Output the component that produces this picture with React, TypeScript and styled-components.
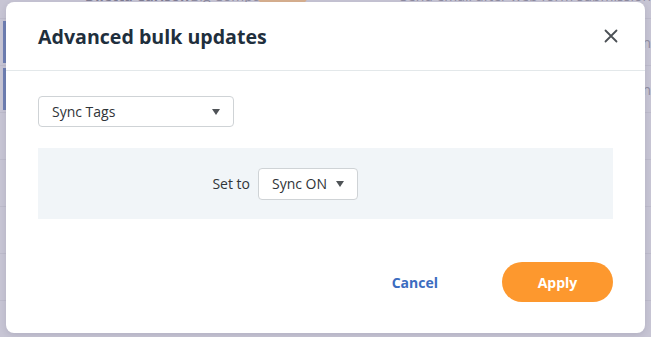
import styled, { createGlobalStyle } from 'styled-components';

const GlobalStyle = createGlobalStyle`
  html, body {
    margin: 0;
    padding: 0;
    width: 651px;
    height: 337px;
    overflow: hidden;
    font-family: "Open Sans", "Liberation Sans", sans-serif;
  }
`;

const Page = styled.div`
  position: relative;
  width: 651px;
  height: 337px;
  background-color: #c7c5d4;
  overflow: hidden;
`;

const BackTable = styled.div`
  display: flex;
  flex-direction: column;
  margin-top: -28px;
`;

const BackRow = styled.div`
  display: flex;
  align-items: center;
  height: 46px;
  border-bottom: 1px solid #bdbbcb;
  color: #8f8ca0;
  font-size: 14px;
  white-space: nowrap;
`;

const RowMarker = styled.div<{ $on?: boolean }>`
  width: 3px;
  height: 42px;
  margin-left: 3px;
  background-color: ${(p) => (p.$on ? '#6f7fb3' : 'transparent')};
`;

const BackName = styled.span`
  margin-left: 79px;
  width: 110px;
  font-weight: 700;
  color: #7f7c92;
`;

const BackCompany = styled.span`
  width: 67px;
`;

const BackPill = styled.span<{ $show?: boolean }>`
  width: 53px;
  height: 20px;
  border-radius: 10px;
  background-color: ${(p) => (p.$show ? '#d8b08f' : 'transparent')};
  margin-right: 92px;
`;

const Overlay = styled.div`
  position: absolute;
  inset: 0;
  display: flex;
  padding: 2px 6px 4px 6px;
`;

const Modal = styled.div`
  flex: 1;
  display: flex;
  flex-direction: column;
  background-color: #ffffff;
  border-radius: 8px;
  box-shadow: 0 2px 6px rgba(40, 40, 70, 0.12);
`;

const Header = styled.div`
  display: flex;
  align-items: center;
  justify-content: space-between;
  height: 68px;
  padding: 0 24px 0 32px;
  border-bottom: 1px solid #e3e8ea;
`;

const Title = styled.h2`
  margin: 0;
  font-size: 19.6px;
  font-weight: 700;
  color: #1f2f3d;
`;

const CloseButton = styled.button`
  display: flex;
  align-items: center;
  justify-content: center;
  width: 20px;
  height: 20px;
  padding: 0;
  border: none;
  background: none;
  cursor: pointer;
`;

const Body = styled.div`
  display: flex;
  flex-direction: column;
  gap: 21px;
  padding: 25px 32px 0 32px;
`;

const Select = styled.div<{ $width: number; $height: number }>`
  display: flex;
  align-items: center;
  justify-content: space-between;
  box-sizing: border-box;
  width: ${(p) => p.$width}px;
  height: ${(p) => p.$height}px;
  padding: 0 13px 0 13px;
  border: 1px solid #cfd3d6;
  border-radius: 4px;
  background-color: #ffffff;
  font-size: 14px;
  color: #2f3438;
  cursor: pointer;
`;

const Caret = styled.span`
  width: 0;
  height: 0;
  border-left: 4.5px solid transparent;
  border-right: 4.5px solid transparent;
  border-top: 6px solid #4f5357;
`;

const Panel = styled.div`
  display: grid;
  grid-template-columns: 212px auto;
  column-gap: 8px;
  align-items: center;
  height: 71px;
  background-color: #f1f5f8;
`;

const FieldLabel = styled.span`
  justify-self: end;
  font-size: 14px;
  color: #2f3438;
`;

const Footer = styled.div`
  display: flex;
  justify-content: flex-end;
  align-items: center;
  gap: 40px;
  margin-top: auto;
  padding: 0 32px 31px 32px;
`;

const LinkButton = styled.button`
  padding: 0 24px 0 0;
  border: none;
  background: none;
  font-family: inherit;
  font-size: 14px;
  font-weight: 700;
  color: #3b6cc0;
  cursor: pointer;
`;

const PrimaryButton = styled.button`
  width: 111px;
  height: 40px;
  border: none;
  border-radius: 20px;
  background-color: #fd982e;
  font-family: inherit;
  font-size: 14px;
  font-weight: 700;
  color: #ffffff;
  cursor: pointer;
`;

const rows = [
  { on: false, name: 'Dlietta Carlson', company: 'Big Company Inc', task: 'Send email after web form submission' },
  { on: true, name: '', company: '', task: 'Send email after web form submission' },
  { on: true, name: '', company: '', task: 'Send email after web form submission' },
  { on: false, name: '', company: '', task: '' },
  { on: false, name: '', company: '', task: '' },
  { on: false, name: '', company: '', task: '' },
  { on: false, name: '', company: '', task: '' },
  { on: false, name: '', company: '', task: '' },
];

const App = () => {
  return (
    <>
      <GlobalStyle />
      <Page>
        <BackTable>
          {rows.map((r, i) => (
            <BackRow key={i}>
              <RowMarker $on={r.on} />
              <BackName>{r.name}</BackName>
              <BackCompany>{r.company}</BackCompany>
              <BackPill $show={!!r.name} />
              <span>{r.task}</span>
            </BackRow>
          ))}
        </BackTable>
        <Overlay>
          <Modal>
            <Header>
              <Title>Advanced bulk updates</Title>
              <CloseButton aria-label="Close">
                <svg width="14" height="14" viewBox="0 0 14 14">
                  <path d="M1.5 1.5 L12.5 12.5 M12.5 1.5 L1.5 12.5" stroke="#4b5055" strokeWidth="1.8" strokeLinecap="round" />
                </svg>
              </CloseButton>
            </Header>
            <Body>
              <Select $width={196} $height={31}>
                <span>Sync Tags</span>
                <Caret />
              </Select>
              <Panel>
                <FieldLabel>Set to</FieldLabel>
                <Select $width={100} $height={32}>
                  <span>Sync ON</span>
                  <Caret />
                </Select>
              </Panel>
            </Body>
            <Footer>
              <LinkButton>Cancel</LinkButton>
              <PrimaryButton>Apply</PrimaryButton>
            </Footer>
          </Modal>
        </Overlay>
      </Page>
    </>
  );
};

export default App;
